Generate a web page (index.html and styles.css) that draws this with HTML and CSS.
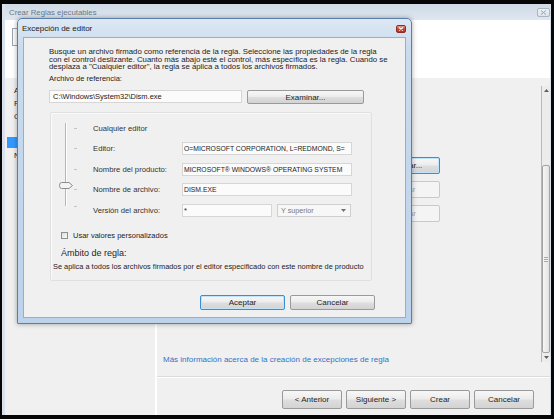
FILE: index.html
```html
<!DOCTYPE html>
<html lang="es">
<head>
<meta charset="utf-8">
<title>Crear Reglas ejecutables</title>
<link rel="stylesheet" href="styles.css">
</head>
<body>
<div class="screen">
  <div class="window">
    <div class="titlebar">
      <span class="title">Crear Reglas ejecutables</span>
      <span class="wclose"><svg width="7" height="5" viewBox="0 0 7 5"><path d="M1 0.5 L6 4.5 M6 0.5 L1 4.5" stroke="#9aa6b3" stroke-width="1"/></svg></span>
    </div>
    <div class="header"><div class="hicon"></div></div>
    <div class="body">
      <div class="steps">
        <div class="step">Antes</div>
        <div class="step">Permisos</div>
        <div class="step">Condiciones</div>
        <div class="step sub">Editor</div>
        <div class="step sub selected">Excepciones</div>
        <div class="step">Nombre</div>
      </div>
      <div class="vsep"></div>
      <div class="main">
        <div class="main-top">
          <div class="content">
            <div class="side-buttons">
              <div class="btn default">Agregar...</div>
              <div class="btn disabled">Editar</div>
              <div class="btn disabled">Quitar</div>
            </div>
            <a class="link">Más información acerca de la creación de excepciones de regla</a>
          </div>
          <div class="scrollbar">
            <div class="sb-arrow"><svg width="5" height="3" viewBox="0 0 5 3"><path d="M0 3 L2.5 0 L5 3 Z" fill="#606060"/></svg></div>
            <div class="sb-track">
              <div class="sb-thumb"><span class="grip"></span></div>
            </div>
            <div class="sb-arrow"><svg width="5" height="3" viewBox="0 0 5 3"><path d="M0 0 L2.5 3 L5 0 Z" fill="#606060"/></svg></div>
          </div>
        </div>
        <div class="footer">
          <div class="btn fbtn">&lt; Anterior</div>
          <div class="btn fbtn">Siguiente &gt;</div>
          <div class="btn fbtn">Crear</div>
          <div class="btn fbtn">Cancelar</div>
        </div>
      </div>
    </div>
  </div>

  <div class="dialog">
    <div class="dtitle">
      <span class="dtitle-text">Excepción de editor</span>
      <span class="dclose"><svg width="6" height="4" viewBox="0 0 6 4"><path d="M1 0.5 L5 3.5 M5 0.5 L1 3.5" stroke="#fff" stroke-width="1.1"/></svg></span>
    </div>
    <div class="client">
      <p class="intro">Busque un archivo firmado como referencia de la regla. Seleccione las propiedades de la regla<br>con el control deslizante. Cuanto más abajo esté el control, más específica es la regla. Cuando se<br>desplaza a "Cualquier editor", la regla se aplica a todos los archivos firmados.</p>
      <div class="reflabel">Archivo de referencia:</div>
      <div class="refrow">
        <div class="field refpath">C:\Windows\System32\Dism.exe</div>
        <div class="btn examinar">Examinar...</div>
      </div>
      <div class="group">
        <div class="grid">
          <div class="slider">
            <svg width="42" height="103" viewBox="0 0 42 103">
              <line x1="14.5" y1="5" x2="14.5" y2="88" stroke="#b5b5b5" stroke-width="1"/>
              <line x1="15.5" y1="5" x2="15.5" y2="88" stroke="#ffffff" stroke-width="1"/>
              <line x1="23" y1="10.5" x2="26" y2="10.5" stroke="#c4c4c4"/>
              <line x1="23" y1="30.5" x2="26" y2="30.5" stroke="#c4c4c4"/>
              <line x1="23" y1="51.5" x2="26" y2="51.5" stroke="#c4c4c4"/>
              <line x1="23" y1="71.5" x2="26" y2="71.5" stroke="#c4c4c4"/>
              <line x1="23" y1="88.5" x2="26" y2="88.5" stroke="#c4c4c4"/>
              <path d="M10.5 64.5 L18 64.5 L21.5 67.5 L18 70.5 L10.5 70.5 Q8.5 70.5 8.5 67.5 Q8.5 64.5 10.5 64.5 Z" fill="#f3f3f3" stroke="#8c8c8c" stroke-width="1"/>
            </svg>
          </div>
          <div class="lbl">Cualquier editor</div>
          <div></div>
          <div class="lbl">Editor:</div>
          <div class="field up">O=MICROSOFT CORPORATION, L=REDMOND, S=</div>
          <div class="lbl">Nombre del producto:</div>
          <div class="field up">MICROSOFT® WINDOWS® OPERATING SYSTEM</div>
          <div class="lbl">Nombre de archivo:</div>
          <div class="field up">DISM.EXE</div>
          <div class="lbl">Versión del archivo:</div>
          <div class="verrow">
            <div class="field ver">*</div>
            <div class="combo"><span>Y superior</span><svg width="5" height="3" viewBox="0 0 5 3"><path d="M0 0 L2.5 3 L5 0 Z" fill="#707070"/></svg></div>
          </div>
        </div>
        <div class="checkrow"><span class="check"></span><span>Usar valores personalizados</span></div>
        <div class="scope">Ámbito de regla:</div>
        <div class="scopetext">Se aplica a todos los archivos firmados por el editor especificado con este nombre de producto</div>
      </div>
      <div class="dbuttons">
        <div class="btn dbtn default">Aceptar</div>
        <div class="btn dbtn">Cancelar</div>
      </div>
    </div>
  </div>
</div>
</body>
</html>
```
FILE: styles.css
```css
* { box-sizing: border-box; margin: 0; padding: 0; }

body {
  margin: 0;
  background: #000;
  font-family: "Liberation Sans", Arial, sans-serif;
  color: #222;
}

.screen {
  position: relative;
  width: 554px;
  height: 419px;
  background: #060606;
  padding: 4px 3px 4px 2px;
  overflow: hidden;
}

/* background wizard window */
.window {
  height: 411px;
  display: flex;
  flex-direction: column;
  background: #d9e2ec;
  padding: 0 1px 0 3px;
}

.titlebar {
  height: 16px;
  flex: none;
  display: flex;
  align-items: center;
  justify-content: space-between;
  padding-left: 4px;
  background: linear-gradient(#cfdae6, #dfe7f0);
}

.title {
  font-size: 7.8px;
  color: #6a7889;
}

.wclose {
  width: 13px;
  height: 9px;
  margin-top: 1px;
  border: 1px solid #aab6c3;
  border-radius: 2px;
  background: linear-gradient(#eef2f6, #dbe3eb);
  display: flex;
  align-items: center;
  justify-content: center;
}

.header {
  height: 58px;
  flex: none;
  background: #fff;
  padding: 8px 0 0 7px;
}

.hicon {
  width: 18px;
  height: 18px;
  border: 1px solid #9ba5b0;
  background: #fbfbfb;
}

.body {
  flex: 1;
  display: flex;
  background: #f0f0f0;
}

.steps {
  width: 150px;
  flex: none;
  padding-top: 6px;
  font-size: 8px;
  color: #1e1e1e;
}

.step {
  height: 13px;
  line-height: 13px;
  padding-left: 9px;
  white-space: nowrap;
}

.step.sub { padding-left: 22px; }

.step.selected {
  margin: 1px 0 1px 2px;
  height: 11px;
  line-height: 11px;
  padding-left: 20px;
  background: #3399ff;
  color: #fff;
}

.vsep {
  width: 2px;
  flex: none;
  background: #fff;
}

.main {
  flex: 1;
  display: flex;
  flex-direction: column;
}

.main-top {
  flex: 1;
  display: flex;
}

.content {
  flex: 1;
  display: flex;
  flex-direction: column;
  padding: 79px 0 12px 6px;
}

.side-buttons {
  align-self: flex-end;
  margin-right: 101px;
  display: flex;
  flex-direction: column;
  gap: 7px;
}

.side-buttons .btn {
  width: 70px;
  height: 17px;
}

.link {
  margin-top: auto;
  font-size: 8px;
  line-height: 10px;
  color: #3072c8;
  white-space: nowrap;
}

.scrollbar {
  width: 9px;
  flex: none;
  margin: 8px 0 15px;
  display: flex;
  flex-direction: column;
  background: #ececec;
  border-left: 1px solid #b9b9b9;
}

.sb-arrow {
  height: 9px;
  flex: none;
  display: flex;
  align-items: center;
  justify-content: center;
}

.sb-track {
  flex: 1;
  display: flex;
  flex-direction: column;
  padding-top: 70px;
}

.sb-thumb {
  flex: 1;
  border: 1px solid #a3a3a3;
  border-radius: 2px;
  background: linear-gradient(90deg, #f6f6f6, #e3e3e3);
  display: flex;
  align-items: center;
  justify-content: center;
}

.grip {
  width: 4px;
  height: 5px;
  border-top: 1px solid #a8a8a8;
  border-bottom: 1px solid #a8a8a8;
  background: linear-gradient(#f3f3f3 40%, #a8a8a8 40%, #a8a8a8 60%, #f3f3f3 60%);
}

.footer {
  height: 38px;
  flex: none;
  border-top: 1px solid #fff;
  box-shadow: 0 -1px 0 #dcdcdc;
  display: flex;
  justify-content: flex-end;
  gap: 4px;
  padding: 12px 16px 0 0;
}

.fbtn {
  width: 60px;
  height: 19px;
}

/* buttons */
.btn {
  display: flex;
  align-items: center;
  justify-content: center;
  font-size: 8px;
  color: #1e1e1e;
  border: 1px solid #9a9a9a;
  border-radius: 2px;
  background: linear-gradient(#f7f7f7 0%, #ececec 48%, #dedede 52%, #d3d3d3 100%);
  white-space: nowrap;
}

.btn.default {
  border-color: #3d8ccc;
  box-shadow: inset 0 0 0 1px #bfe4fb;
}

.btn.disabled {
  border-color: #c9c9c9;
  background: #f4f4f4;
  color: #a4a4a4;
}

/* dialog */
.dialog {
  position: absolute;
  left: 17px;
  top: 18px;
  width: 395px;
  height: 306px;
  border: 1px solid #5a7ea8;
  border-radius: 5px 5px 1px 1px;
  background: linear-gradient(#dde8f4, #c9dbee 30px, #bcd3eb);
  padding: 0 5px 5px;
  display: flex;
  flex-direction: column;
  box-shadow: 0 0 5px rgba(0, 0, 0, 0.35);
}

.dtitle {
  height: 18px;
  flex: none;
  display: flex;
  align-items: center;
  justify-content: space-between;
  padding-top: 1px;
}

.dtitle-text {
  font-size: 8px;
  color: #1a1a1a;
  margin-left: -1px;
}

.dclose {
  width: 10px;
  height: 8px;
  border: 1px solid #8a2e22;
  border-radius: 2px;
  background: linear-gradient(#e79d90, #c6412d 55%, #b9321f);
  display: flex;
  align-items: center;
  justify-content: center;
}

.client {
  flex: 1;
  background: #f0f0f0;
  border: 1px solid #95aecb;
  padding: 10px 0 0 25px;
  display: flex;
  flex-direction: column;
  align-items: flex-start;
}

.intro {
  font-size: 7.8px;
  line-height: 7.5px;
  color: #222;
  white-space: nowrap;
}

.reflabel {
  margin-top: 4.5px;
  font-size: 7.5px;
  line-height: 8px;
  color: #222;
}

.refrow {
  margin-top: 7px;
  display: flex;
  align-items: flex-start;
  gap: 5px;
}

.field {
  height: 13px;
  border: 1px solid #d6d6d6;
  background: #fbfbfb;
  font-size: 7.5px;
  color: #222;
  padding-left: 1px;
  display: flex;
  align-items: center;
  white-space: nowrap;
  overflow: hidden;
}

.field.up {
  font-size: 6.8px;
}

.refpath {
  width: 193px;
  padding-left: 3px;
}

.examinar {
  width: 117px;
  height: 14px;
}

.group {
  margin: 8px 0 0 1px;
  width: 322px;
  height: 169px;
  border: 1px solid #e0e0e0;
  border-radius: 2px;
  box-shadow: inset 1px 1px 0 #fafafa;
  padding-top: 5px;
}

.grid {
  display: grid;
  grid-template-columns: 42px 89px 170px;
  grid-template-rows: repeat(5, 20.5px);
  align-items: center;
}

.slider {
  grid-column: 1;
  grid-row: 1 / 6;
  align-self: start;
  height: 103px;
}

.lbl {
  font-size: 7.7px;
  color: #333;
  white-space: nowrap;
}

.verrow {
  display: flex;
  gap: 5px;
}

.ver { width: 90px; }

.combo {
  width: 74px;
  height: 13px;
  border: 1px solid #cfcfcf;
  background: #f7f7f7;
  font-size: 7.2px;
  color: #777;
  display: flex;
  align-items: center;
  justify-content: space-between;
  padding: 0 4px 0 3px;
}

.checkrow {
  margin: 9.5px 0 0 10px;
  height: 10px;
  display: flex;
  align-items: center;
  gap: 5px;
  font-size: 7.5px;
  color: #222;
}

.check {
  width: 7px;
  height: 7px;
  border: 1px solid #8e8f8f;
  background: linear-gradient(135deg, #dedede, #fafafa);
}

.scope {
  margin: 7px 0 0 10px;
  font-size: 9px;
  line-height: 12px;
  color: #1e1e1e;
}

.scopetext {
  margin: 4px 0 0 2px;
  font-size: 7.4px;
  line-height: 8px;
  color: #222;
  white-space: nowrap;
}

.dbuttons {
  margin: 14px 0 0 151px;
  display: flex;
  gap: 5px;
}

.dbtn {
  width: 85px;
  height: 15px;
}
```
